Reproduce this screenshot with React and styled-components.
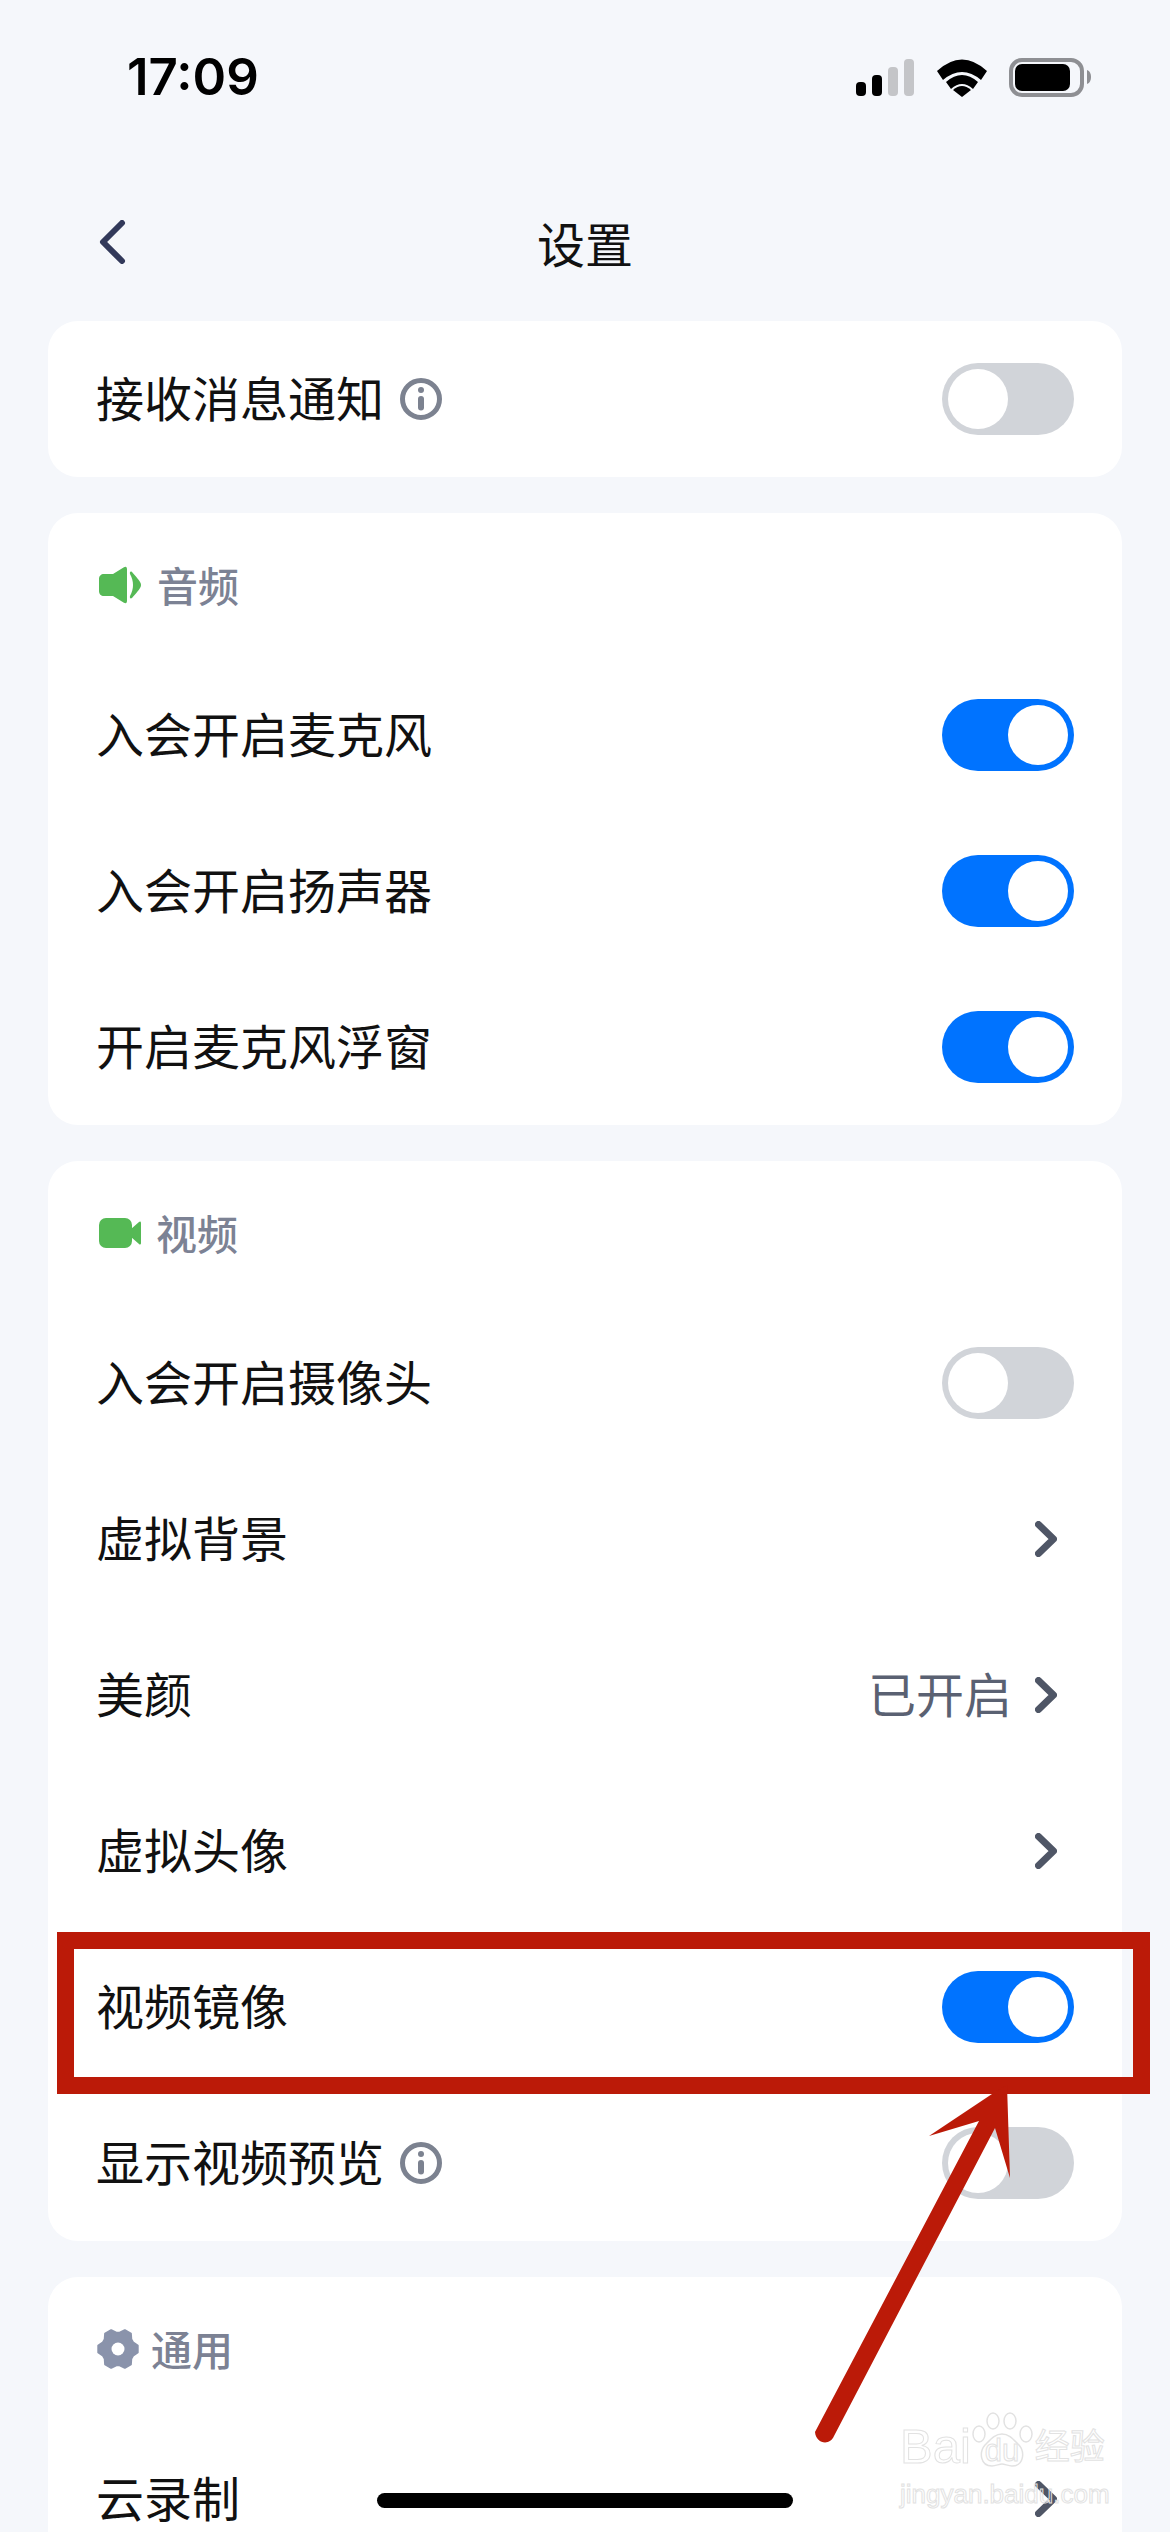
import React from 'react';
import styled, { createGlobalStyle } from 'styled-components';

const GlobalStyle = createGlobalStyle`
  html, body {
    margin: 0;
    padding: 0;
    background: #f5f7fb;
  }
  * {
    box-sizing: border-box;
  }
`;

const Page = styled.div`
  position: relative;
  width: 1170px;
  height: 2532px;
  overflow: hidden;
  background: #f5f7fb;
  font-family: "Noto Sans CJK SC", "Noto Sans", sans-serif;
  color: #111;
`;

const StatusBar = styled.div`
  height: 156px;
  padding: 46px 78px 0 127px;
  display: flex;
  justify-content: space-between;
  align-items: flex-start;
`;

const Clock = styled.div`
  font-family: Inter, "Liberation Sans", sans-serif;
  font-size: 51px;
  font-weight: 600;
  line-height: 62px;
  color: #000;
`;

const StatusIcons = styled.svg`
  display: block;
  margin-top: 12px;
`;

const NavBar = styled.div`
  height: 165px;
  padding: 7px 48px 0;
  display: grid;
  grid-template-columns: 1fr auto 1fr;
  align-items: center;
`;

const BackButton = styled.svg`
  display: block;
  margin-left: 50px;
`;

const Title = styled.div`
  font-size: 48px;
  line-height: 60px;
`;

const Stack = styled.div`
  padding: 0 48px;
  display: flex;
  flex-direction: column;
  gap: 36px;
`;

const Card = styled.section`
  background: #fff;
  border-radius: 30px;
`;

const CardHeader = styled.div`
  height: 144px;
  padding-left: ${props => props.$inset}px;
  display: flex;
  align-items: center;
  gap: ${props => props.$gap}px;
  font-size: 41px;
  font-weight: 500;
  color: #7c8294;
`;

const HeaderText = styled.span`
  margin-bottom: 3px;
`;

const Row = styled.div`
  height: 156px;
  padding: 0 48px;
  display: flex;
  align-items: center;
  font-size: 48px;
`;

const Label = styled.div`
  flex: 1;
  display: flex;
  align-items: center;
  gap: 16px;
  line-height: 60px;
`;

const LabelText = styled.span`
  margin-bottom: 6px;
`;

const Value = styled.span`
  color: #5a6172;
  margin: 0 23px 6px 0;
`;

const ChevronIcon = styled.svg`
  display: block;
  margin-right: 17px;
`;

const Track = styled.div`
  width: 132px;
  height: 72px;
  padding: 6px;
  border-radius: 36px;
  display: flex;
  justify-content: ${props => (props.$on ? 'flex-end' : 'flex-start')};
  background: ${props => (props.$on ? '#0073ff' : '#d1d4d9')};
`;

const Knob = styled.div`
  width: 60px;
  height: 60px;
  border-radius: 50%;
  background: #fff;
`;

const HomeBar = styled.div`
  position: absolute;
  left: 377px;
  top: 2493px;
  width: 416px;
  height: 15px;
  border-radius: 8px;
  background: #000;
`;

const Highlight = styled.div`
  position: absolute;
  left: 57px;
  top: 1932px;
  width: 1093px;
  height: 162px;
  border: 17px solid #bb1a08;
`;

const ArrowMark = styled.svg`
  position: absolute;
  left: 800px;
  top: 2070px;
`;

const Watermark = styled.div`
  position: absolute;
  left: 900px;
  top: 2408px;
  width: 210px;
  color: transparent;
  -webkit-text-stroke: 1px #e2e2e2;
  font-family: "Liberation Sans", sans-serif;
`;

const MarkTop = styled.div`
  display: flex;
  align-items: flex-end;
  height: 66px;
`;

const MarkBai = styled.span`
  font-size: 49px;
  line-height: 56px;
`;

const PawBox = styled.div`
  position: relative;
  width: 64px;
  height: 56px;
  margin-bottom: 6px;
  flex: none;
`;

const MarkDu = styled.span`
  position: absolute;
  left: 14px;
  top: 22px;
  font-size: 31px;
  line-height: 34px;
`;

const MarkCn = styled.span`
  font-family: "Noto Sans CJK SC", sans-serif;
  font-size: 35px;
  line-height: 44px;
  margin-bottom: 8px;
  white-space: nowrap;
`;

const MarkUrl = styled.div`
  margin-top: 4px;
  font-size: 26px;
  line-height: 32px;
  white-space: nowrap;
`;

// six rounded teeth around the hole
const gearPoints = () => {
  const pts = [];
  for (let i = 0; i < 6; i++) {
    const a = (i * 60 * Math.PI) / 180;
    [[-24, 16.4], [-10, 20], [10, 20], [24, 16.4]].forEach(([d, r]) => {
      const t = a + (d * Math.PI) / 180;
      pts.push(`${(21 + r * Math.cos(t)).toFixed(2)},${(21 + r * Math.sin(t)).toFixed(2)}`);
    });
  }
  return pts.join(' ');
};

const Toggle = ({ on }) => (
  <Track $on={on}>
    <Knob />
  </Track>
);

const Chevron = () => (
  <ChevronIcon width="22" height="36" viewBox="0 0 22 36" fill="none">
    <path d="M3.500 3.500 18.500 18 3.500 32.500" stroke="#4f5666" strokeWidth="7" strokeLinecap="round" strokeLinejoin="round" />
  </ChevronIcon>
);

const InfoIcon = () => (
  <svg width="42" height="42" viewBox="0 0 42 42" fill="none">
    <circle cx="21" cy="21" r="18.500" stroke="#7c8290" strokeWidth="5" />
    <circle cx="21" cy="12" r="3" fill="#7c8290" />
    <rect x="18" y="18" width="6" height="14.500" rx="3" fill="#7c8290" />
  </svg>
);

const SpeakerIcon = () => (
  <svg width="42" height="38" viewBox="0 0 42 38" fill="#55b955">
    <path d="M5 8h9L24.500 1.500C27 0 28 1 28 3.500v31c0 2.500-1 3.500-3.500 2L14 30H5c-3 0-5-2-5-5V13c0-3 2-5 5-5z" />
    <path d="M33 6c6 7 9 10 9 13s-3 6-9 13c-1.500 1-2.500 0-2-2 2-4 3-7 3-11s-1-7-3-11c-.5-2 .5-3 2-2z" />
  </svg>
);

const CameraIcon = () => (
  <svg width="42" height="30" viewBox="0 0 42 30" fill="#55b955">
    <rect x="0" y="0" width="33" height="30" rx="7" />
    <path d="M32 11 40 4c1-1 2-.5 2 1v20c0 1.500-1 2-2 1l-8-7z" />
  </svg>
);

const GearIcon = () => (
  <svg width="42" height="42" viewBox="0 0 42 42">
    <polygon points={gearPoints()} fill="#8a93ab" stroke="#8a93ab" strokeWidth="2" strokeLinejoin="round" />
    <circle cx="21" cy="21" r="6.500" fill="#fff" />
  </svg>
);

const App = () => {
  return (
    <Page>
      <GlobalStyle />
      <StatusBar>
        <Clock>17:09</Clock>
        <StatusIcons width="236" height="40" viewBox="0 0 236 40">
          <rect x="0" y="24" width="10" height="14" rx="4" fill="#000" />
          <rect x="16" y="17" width="10" height="21" rx="4" fill="#000" />
          <rect x="32" y="9" width="10" height="29" rx="4" fill="#c4c5c8" />
          <rect x="48" y="1" width="10" height="37" rx="4" fill="#c4c5c8" />
          <path d="M81 13Q106-10 131 13L125 22Q106 6 87 22z" fill="#000" />
          <path d="M90 24Q106 10 122 24L117 31Q106 21 95 31z" fill="#000" />
          <path d="M97 32Q106 24 115 32L106 39z" fill="#000" />
          <rect x="155" y="2" width="71" height="35" rx="11" fill="none" stroke="#8e8f93" strokeWidth="4" />
          <rect x="159" y="6" width="55" height="27" rx="7" fill="#000" />
          <path d="M231 12c3 1 4 4 4 7s-1 6-4 7z" fill="#8e8f93" />
        </StatusIcons>
      </StatusBar>

      <NavBar>
        <BackButton width="28" height="44" viewBox="0 0 28 44" fill="none">
          <path d="M24 3 5 22l19 19" stroke="#32395a" strokeWidth="6" strokeLinecap="round" strokeLinejoin="round" />
        </BackButton>
        <Title>设置</Title>
      </NavBar>

      <Stack>
        <Card>
          <Row>
            <Label><LabelText>接收消息通知</LabelText><InfoIcon /></Label>
            <Toggle />
          </Row>
        </Card>

        <Card>
          <CardHeader $inset={51} $gap={16}>
            <SpeakerIcon /><HeaderText>音频</HeaderText>
          </CardHeader>
          <Row><Label><LabelText>入会开启麦克风</LabelText></Label><Toggle on /></Row>
          <Row><Label><LabelText>入会开启扬声器</LabelText></Label><Toggle on /></Row>
          <Row><Label><LabelText>开启麦克风浮窗</LabelText></Label><Toggle on /></Row>
        </Card>

        <Card>
          <CardHeader $inset={51} $gap={15}>
            <CameraIcon /><HeaderText>视频</HeaderText>
          </CardHeader>
          <Row><Label><LabelText>入会开启摄像头</LabelText></Label><Toggle /></Row>
          <Row><Label><LabelText>虚拟背景</LabelText></Label><Chevron /></Row>
          <Row><Label><LabelText>美颜</LabelText></Label><Value>已开启</Value><Chevron /></Row>
          <Row><Label><LabelText>虚拟头像</LabelText></Label><Chevron /></Row>
          <Row><Label><LabelText>视频镜像</LabelText></Label><Toggle on /></Row>
          <Row><Label><LabelText>显示视频预览</LabelText><InfoIcon /></Label><Toggle /></Row>
        </Card>

        <Card>
          <CardHeader $inset={49} $gap={12}>
            <GearIcon /><HeaderText>通用</HeaderText>
          </CardHeader>
          <Row><Label><LabelText>云录制</LabelText></Label><Chevron /></Row>
        </Card>
      </Stack>

      <Highlight />
      <ArrowMark width="230" height="380" viewBox="800 2070 230 380">
        <path
          d="M1007 2085 1010 2178 995 2128 834 2436C830 2446 816 2444 815 2432L979 2121 929 2136 995 2092z"
          fill="#bb1a08"
        />
      </ArrowMark>

      <Watermark>
        <MarkTop>
          <MarkBai>Bai</MarkBai>
          <PawBox>
            <svg width="64" height="56" viewBox="0 0 64 56" fill="#fff" stroke="#e2e2e2" strokeWidth="1.500">
              <ellipse cx="22" cy="9" rx="6" ry="8" />
              <ellipse cx="39" cy="9" rx="6" ry="8" />
              <ellipse cx="8" cy="22" rx="6" ry="8" />
              <ellipse cx="55" cy="22" rx="6" ry="8" />
              <path d="M31 22c7 0 11 5 17 11 6 7 5 21-7 21-4 0-7-2-10-2s-6 2-10 2c-12 0-13-14-7-21 6-6 10-11 17-11z" />
            </svg>
            <MarkDu>du</MarkDu>
          </PawBox>
          <MarkCn>经验</MarkCn>
        </MarkTop>
        <MarkUrl>jingyan.baidu.com</MarkUrl>
      </Watermark>

      <HomeBar />
    </Page>
  );
};

export default App;
